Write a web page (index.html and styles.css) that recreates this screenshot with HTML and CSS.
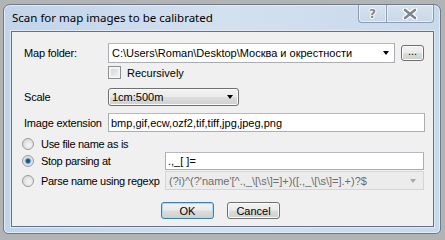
FILE: index.html
```html
<!DOCTYPE html>
<html lang="en">
  <head>
    <meta charset="utf-8" />
    <title>Scan for map images to be calibrated</title>
    <link rel="stylesheet" href="styles.css">
  </head>
  <body>
    <div class="window">
      <div class="window__titlebar">
        <span class="window__title">Scan for map images to be calibrated</span>
        <div class="window__caption">
          <span class="caption__btn caption__btn--help">?</span>
          <span class="caption__btn caption__btn--close">
            <svg width="16" height="12" viewBox="0 0 16 12">
              <path d="M3 2 L13 10 M13 2 L3 10" stroke="#fff" stroke-width="5" stroke-linecap="round"/>
              <path d="M3 2 L13 10 M13 2 L3 10" stroke="#7d8590" stroke-width="2.6" stroke-linecap="round"/>
            </svg>
          </span>
        </div>
      </div>

      <div class="window__client">
        <div class="form__row form__row--folder">
          <span class="form__label">Map folder:</span>
          <div class="combo combo--folder">
            <span class="combo__text">C:\Users\Roman\Desktop\Москва и окрестности</span>
            <span class="combo__arrow"></span>
          </div>
          <span class="btn btn--browse">...</span>
        </div>

        <div class="form__row form__row--check">
          <span class="form__label"></span>
          <span class="check"></span>
          <span class="check__text">Recursively</span>
        </div>

        <div class="form__row form__row--scale">
          <span class="form__label">Scale</span>
          <div class="dropdown">
            <span class="dropdown__text">1cm:500m</span>
            <span class="combo__arrow"></span>
          </div>
        </div>

        <div class="form__row form__row--ext">
          <span class="form__label">Image extension</span>
          <div class="textbox textbox--ext">bmp,gif,ecw,ozf2,tif,tiff,jpg,jpeg,png</div>
        </div>

        <div class="radio__row radio__row--plain">
          <span class="radio"></span>
          <span class="radio__text">Use file name as is</span>
        </div>

        <div class="radio__row radio__row--stop">
          <span class="radio radio--checked"></span>
          <span class="radio__text">Stop parsing at</span>
          <div class="textbox textbox--stop">.,_[ ]=</div>
        </div>

        <div class="radio__row radio__row--regexp">
          <span class="radio"></span>
          <span class="radio__text">Parse name using regexp</span>
          <div class="combo combo--disabled">
            <span class="combo__text">(?i)^(?'name'[^.,_\[\s\]=]+)([.,_\[\s\]=].+)?$</span>
            <span class="combo__arrow combo__arrow--disabled"></span>
          </div>
        </div>

        <div class="form__buttons">
          <span class="btn btn--default">OK</span>
          <span class="btn">Cancel</span>
        </div>
      </div>
    </div>
  </body>
</html>
```

FILE: styles.css
```css
body {
  margin: 0;
  padding: 4px 0 0 3px;
  background: #b2b3b5;
  font-family: "Liberation Sans", Arial, sans-serif;
  font-size: 11px;
  color: #000;
}

.window {
  width: 438px;
  height: 230px;
  box-sizing: border-box;
  padding: 0 6px 7px 7px;
  border: 1px solid #6f7a88;
  border-radius: 7px 7px 5px 5px;
  background: linear-gradient(90deg, #c2d4ea 0%, #d3e0ef 50%, #c9d9ec 100%);
  box-shadow: inset 0 0 0 1px #e3ecf6;
}

.window__titlebar {
  height: 26px;
  display: flex;
  align-items: flex-start;
  justify-content: space-between;
}

.window__title {
  font-family: "Noto Sans", sans-serif;
  font-size: 11.5px;
  margin-top: 5px;
  margin-left: 1px;
  color: #000;
}

.window__caption {
  display: flex;
}

.caption__btn {
  height: 17px;
  display: flex;
  align-items: center;
  justify-content: center;
  border: 1px solid #8a9bb2;
  border-top: none;
  background: linear-gradient(#d7e2ef, #c9d7e8);
  box-shadow: inset 0 0 0 1px #e8eff7;
}

.caption__btn--help {
  width: 27px;
  border-right: none;
  border-radius: 0 0 0 4px;
  font-family: "DejaVu Sans", sans-serif;
  font-weight: bold;
  font-size: 12px;
  color: #7d8590;
  text-shadow: 1px 0 0 #fff, -1px 0 0 #fff, 0 1px 0 #fff, 0 -1px 0 #fff;
}

.caption__btn--close {
  width: 46px;
  border-radius: 0 0 4px 0;
}

.window__client {
  height: 194px;
  border: 1px solid #61728a;
  background: #f0f0f0;
  box-shadow: 0 0 0 1px #dfe8f3;
}

.form__row {
  display: flex;
  align-items: center;
  padding-left: 12px;
}

.form__label {
  width: 84px;
  flex: none;
  white-space: nowrap;
  letter-spacing: -0.2px;
}

.form__row--folder {
  margin-top: 11px;
  height: 20px;
}

.form__row--check {
  margin-top: 3px;
  height: 13px;
}

.form__row--scale {
  margin-top: 9px;
  height: 18px;
}

.form__row--ext {
  margin-top: 7px;
  height: 19px;
}

.combo {
  box-sizing: border-box;
  height: 20px;
  display: flex;
  align-items: center;
  border: 1px solid #abadb3;
  border-top-color: #b5b8c0;
  background: #fff;
  padding-left: 3px;
}

.combo--folder {
  width: 287px;
}

.combo__text {
  flex: 1;
  white-space: nowrap;
  overflow: hidden;
}

.combo__arrow {
  width: 0;
  height: 0;
  margin: 0 5px 0 4px;
  border-left: 3.5px solid transparent;
  border-right: 3.5px solid transparent;
  border-top: 4px solid #000;
}

.combo__arrow--disabled {
  border-top-color: #a8a8a8;
  margin-right: 7px;
}

.combo--disabled {
  width: 259px;
  height: 19px;
  border-color: #d6d6d6;
  background: #ececec;
  color: #6d6d6d;
  margin-left: 4px;
}

.btn {
  box-sizing: border-box;
  height: 16px;
  display: inline-flex;
  align-items: center;
  justify-content: center;
  border: 1px solid #707070;
  border-radius: 3px;
  background: linear-gradient(#f2f2f2 0%, #ebebeb 48%, #dddddd 52%, #cfcfcf 100%);
  box-shadow: inset 0 0 0 1px #fbfbfb;
}

.btn--browse {
  width: 23px;
  margin-left: 6px;
  line-height: 1;
  padding-bottom: 3px;
}

.check {
  width: 13px;
  height: 13px;
  box-sizing: border-box;
  border: 1px solid #8e8f8f;
  background: linear-gradient(135deg, #cbcfd5, #f6f6f6);
  box-shadow: inset 0 0 0 2px #f4f4f4;
}

.check__text {
  margin-left: 6px;
}

.dropdown {
  box-sizing: border-box;
  width: 131px;
  height: 18px;
  display: flex;
  align-items: center;
  padding-left: 3px;
  border: 1px solid #707070;
  border-radius: 3px;
  background: linear-gradient(#f2f2f2 0%, #ebebeb 48%, #dddddd 52%, #cfcfcf 100%);
  box-shadow: inset 0 0 0 1px #fbfbfb;
}

.dropdown__text {
  flex: 1;
}

.textbox {
  box-sizing: border-box;
  height: 19px;
  display: flex;
  align-items: center;
  padding-left: 2px;
  border: 1px solid #abadb3;
  border-top-color: #b5b8c0;
  background: #fff;
  white-space: nowrap;
}

.textbox--ext {
  width: 317px;
}

.textbox--stop {
  width: 259px;
  height: 18px;
  margin-left: 4px;
}

.radio__row {
  display: flex;
  align-items: center;
  padding-left: 10px;
}

.radio__row--plain {
  margin-top: 5px;
  height: 13px;
}

.radio__row--stop {
  margin-top: 2px;
  height: 18px;
}

.radio__row--regexp {
  margin-top: 1px;
  height: 19px;
}

.radio {
  width: 12px;
  height: 12px;
  box-sizing: border-box;
  flex: none;
  border-radius: 50%;
  border: 1px solid #979a9e;
  background: radial-gradient(circle at 60% 60%, #f7f7f7 0%, #dcdcdc 70%, #cfd2d6 100%);
}

.radio--checked {
  background: radial-gradient(circle, #0d3f6a 0%, #2a6a9f 28%, #8db2cf 38%, #e9e9e9 55%, #cfd2d6 100%);
}

.radio__text {
  margin-left: 7px;
  width: 120px;
  flex: none;
  white-space: nowrap;
  letter-spacing: -0.3px;
}

.form__buttons {
  display: flex;
  gap: 13px;
  margin-top: 12px;
  padding-left: 149px;
}

.form__buttons .btn {
  width: 53px;
  height: 17px;
}

.btn--default {
  border-color: #3c7fb1;
  box-shadow: inset 0 0 0 1px #a9daf2;
}
```
